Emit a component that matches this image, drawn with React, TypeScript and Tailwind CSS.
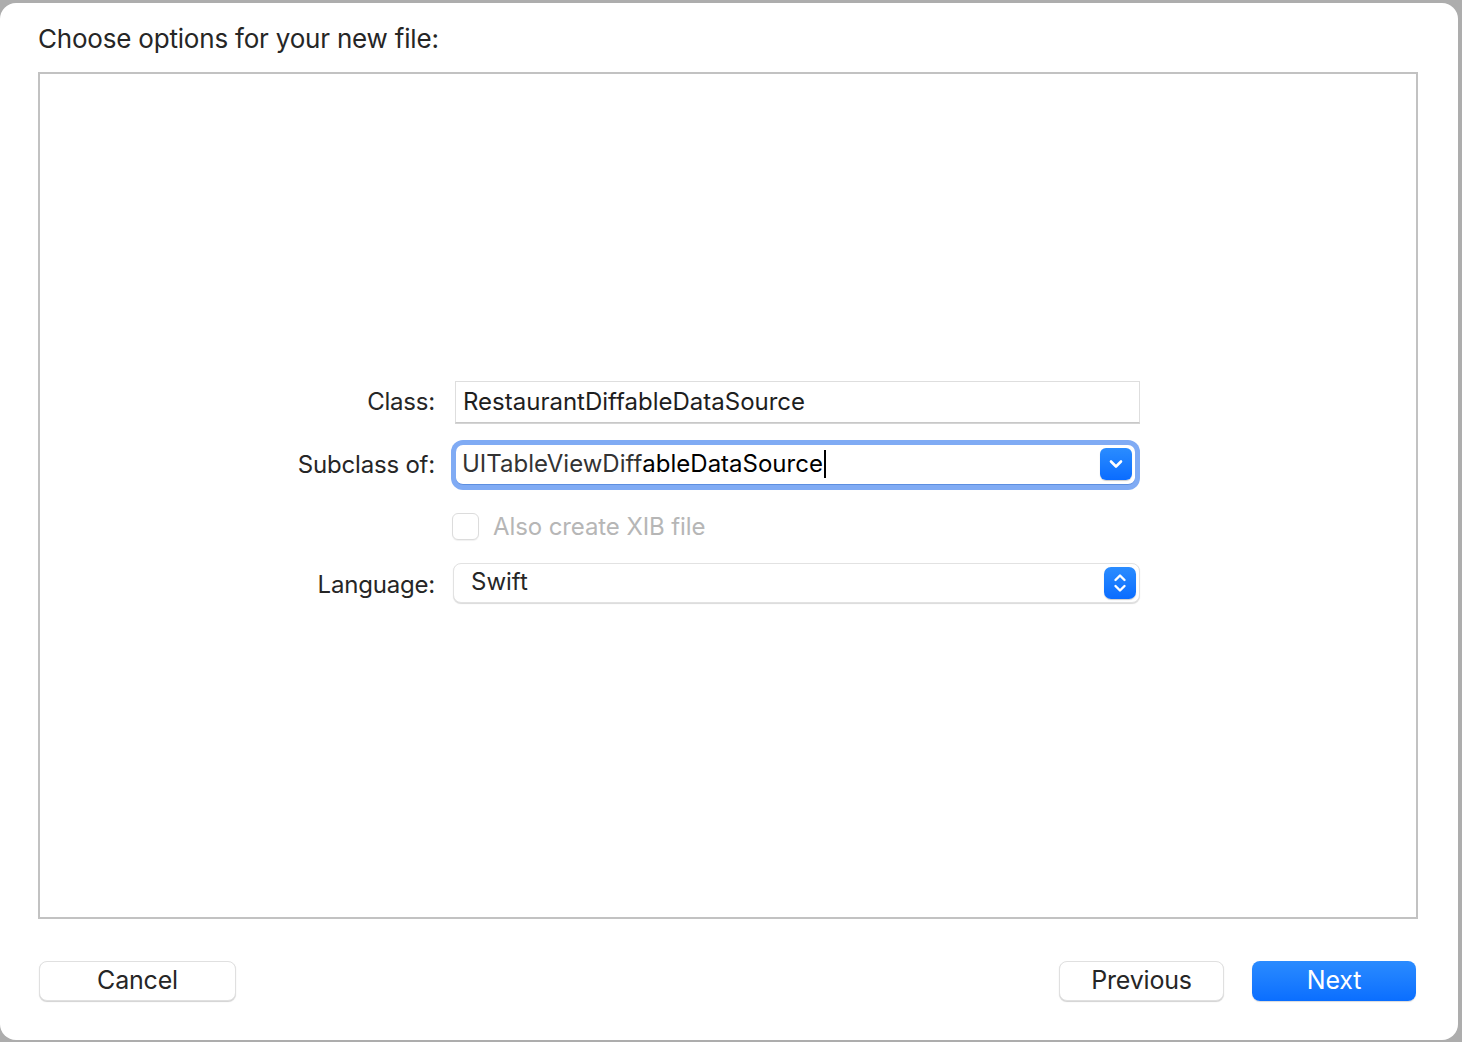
import React from "react";

const font = { fontFamily: "Inter, 'Liberation Sans', sans-serif" };

function ChevronDown() {
  return (
    <svg width="14" height="10" viewBox="0 0 14 10" fill="none">
      <path d="M2 2.5 L7 7.5 L12 2.5" stroke="white" strokeWidth="2.6" strokeLinecap="round" strokeLinejoin="round" />
    </svg>
  );
}

function UpDown() {
  return (
    <svg width="14" height="22" viewBox="0 0 14 22" fill="none">
      <path d="M2.5 8 L7 3.5 L11.5 8" stroke="white" strokeWidth="2.4" strokeLinecap="round" strokeLinejoin="round" />
      <path d="M2.5 14 L7 18.5 L11.5 14" stroke="white" strokeWidth="2.4" strokeLinecap="round" strokeLinejoin="round" />
    </svg>
  );
}

export default function App() {
  return (
    <div
      className="w-[1462px] h-[1042px] bg-[#adadad] pt-[3px] pr-[4px] overflow-hidden"
      style={font}
    >
      <div className="w-full h-[1037px] bg-white rounded-[16px] flex flex-col text-[#262626]">
        <div className="pl-[38px] pt-[20px] h-[69px] text-[26px] leading-[32px] tracking-[-0.2px]">
          Choose options for your new file:
        </div>
        <div className="ml-[38px] w-[1380px] h-[847px] border-2 border-[#c2c2c2] flex flex-col justify-center pb-[8px]">
          {/* Class row */}
          <div className="flex items-center h-[42px]">
            <div className="w-[395px] text-right text-[24px] tracking-[-0.2px]">Class:</div>
            <div className="ml-[20px] w-[685px] h-[42px] border border-[#dedede] border-b-[#c8c8c8] bg-white flex items-center pl-[7px] text-[24px] text-[#1e1e1e] shadow-[0_1px_0_#d4d4d4]">
              RestaurantDiffableDataSource
            </div>
          </div>
          {/* Subclass row */}
          <div className="flex items-center h-[50px] mt-[17px]">
            <div className="w-[395px] text-right text-[24px] tracking-[-0.2px]">Subclass of:</div>
            <div className="ml-[16px] w-[689px] h-[50px] rounded-[12px] bg-[#80abf4] p-[5px]">
              <div className="w-full h-full bg-white rounded-[7px] border-b border-[#5d8fe0] flex items-center pl-[6px] pr-[3px]">
                <div className="flex-1 flex items-center text-[24px]">
                  <span className="text-[#333333]">UITableViewDiff</span>
                  <span className="text-black">ableDataSource</span>
                  <span className="w-[2px] h-[28px] bg-black ml-[1px]"></span>
                </div>
                <div className="w-[32px] h-[32px] rounded-[6px] bg-gradient-to-b from-[#2a8cff] to-[#0a6cff] flex items-center justify-center shadow-[0_1px_1px_rgba(0,0,0,0.2)]">
                  <ChevronDown />
                </div>
              </div>
            </div>
          </div>
          {/* Checkbox row */}
          <div className="flex items-center h-[28px] mt-[23px]">
            <div className="w-[395px]"></div>
            <div className="ml-[17px] w-[27px] h-[27px] rounded-[6px] border border-[#dcdcdc] bg-white shadow-[0_1px_1px_rgba(0,0,0,0.06)]"></div>
            <div className="ml-[14px] text-[24px] text-[#b6b6b6] tracking-[-0.1px]">Also create XIB file</div>
          </div>
          {/* Language row */}
          <div className="flex items-center h-[40px] mt-[22px]">
            <div className="w-[395px] text-right text-[24px] tracking-[-0.2px] pt-[4px]">Language:</div>
            <div className="ml-[18px] w-[687px] h-[40px] rounded-[8px] bg-white border border-[#e2e2e2] shadow-[0_1px_1px_rgba(0,0,0,0.15)] flex items-center pl-[17px] pr-[3px]">
              <div className="flex-1 text-[24px] -mt-[2px]">Swift</div>
              <div className="w-[32px] h-[32px] rounded-[7px] bg-gradient-to-b from-[#2a8cff] to-[#0a6cff] flex items-center justify-center shadow-[0_1px_1px_rgba(0,0,0,0.2)]">
                <UpDown />
              </div>
            </div>
          </div>
        </div>
        {/* Buttons */}
        <div className="flex items-center pl-[39px] pr-[42px] mt-[42px]">
          <div className="w-[197px] h-[40px] rounded-[8px] bg-white border border-[#e0e0e0] shadow-[0_1px_1px_rgba(0,0,0,0.18)] flex items-center justify-center text-[25px] tracking-[-0.2px]">
            Cancel
          </div>
          <div className="flex-1"></div>
          <div className="w-[165px] h-[40px] rounded-[8px] bg-white border border-[#e0e0e0] shadow-[0_1px_1px_rgba(0,0,0,0.18)] flex items-center justify-center text-[25px] tracking-[-0.2px]">
            Previous
          </div>
          <div className="ml-[28px] w-[164px] h-[40px] rounded-[8px] bg-gradient-to-b from-[#2a8bff] to-[#0a6eff] shadow-[0_1px_1px_rgba(0,0,0,0.15)] flex items-center justify-center text-[25px] text-white tracking-[-0.2px]">
            Next
          </div>
        </div>
      </div>
    </div>
  );
}
